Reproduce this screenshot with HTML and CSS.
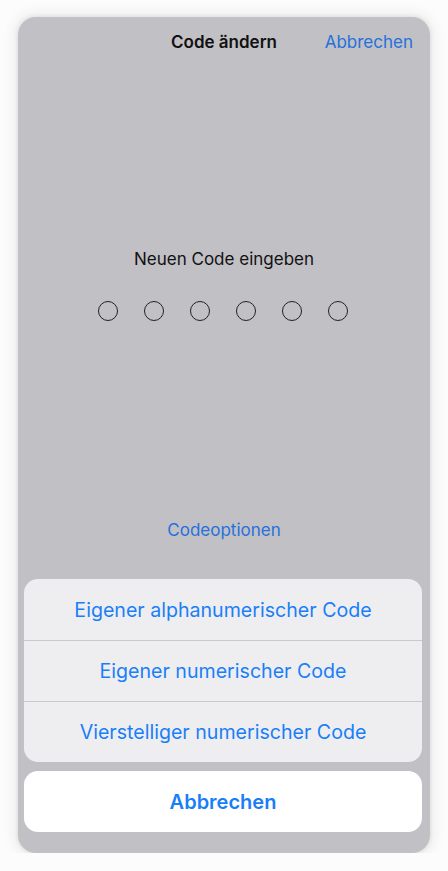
FILE: index.html
```html
<!DOCTYPE html>
<html lang="de">
<head>
    <meta charset="UTF-8">
    <meta name="viewport" content="width=device-width, initial-scale=1.0">
    <title>Code ändern</title>
    <link rel="stylesheet" href="styles.css">
</head>
<body>
    <div class="screen">
        <div class="navbar">
            <span></span>
            <span class="nav-title">Code ändern</span>
            <span class="nav-cancel">Abbrechen</span>
        </div>

        <p class="prompt">Neuen Code eingeben</p>

        <div class="dots">
            <span class="dot"></span>
            <span class="dot"></span>
            <span class="dot"></span>
            <span class="dot"></span>
            <span class="dot"></span>
            <span class="dot"></span>
        </div>

        <p class="options-link">Codeoptionen</p>

        <div class="sheet">
            <div class="sheet-group">
                <div class="sheet-row">Eigener alphanumerischer Code</div>
                <div class="sheet-row">Eigener numerischer Code</div>
                <div class="sheet-row">Vierstelliger numerischer Code</div>
            </div>
            <div class="sheet-cancel">Abbrechen</div>
        </div>
    </div>
</body>
</html>
```

FILE: styles.css
```css
body {
    margin: 0;
    background: #fcfcfc;
    font-family: Inter, "Noto Sans", Arial, sans-serif;
    -webkit-font-smoothing: antialiased;
}

.screen {
    width: 412px;
    height: 836px;
    margin: 17px 0 0 18px;
    background: #c1c0c5;
    border-radius: 18px;
    box-shadow: 0 0 3px 2px rgba(0, 0, 0, 0.05), 0 0 12px 6px rgba(0, 0, 0, 0.05);
    display: flex;
    flex-direction: column;
    padding-bottom: 21px;
    box-sizing: border-box;
}

.navbar {
    display: grid;
    grid-template-columns: 1fr auto 1fr;
    align-items: center;
    padding-top: 14px;
    line-height: 22px;
}

.nav-title {
    font-size: 17px;
    font-weight: 600;
    color: #111;
}

.nav-cancel {
    justify-self: end;
    padding-right: 17px;
    font-size: 17px;
    color: #2571dc;
}

.prompt {
    margin: 195px 0 0;
    text-align: center;
    font-size: 17px;
    line-height: 22px;
    color: #111;
}

.dots {
    display: flex;
    justify-content: center;
    gap: 26px;
    margin: 31px 3px 0 0;
}

.dot {
    width: 18px;
    height: 18px;
    border: 1px solid #222;
    border-radius: 50%;
}

.options-link {
    margin: 198px 0 0;
    text-align: center;
    font-size: 17px;
    line-height: 22px;
    color: #2571dc;
}

.sheet {
    margin: auto 8px 0 6px;
    display: flex;
    flex-direction: column;
    gap: 9px;
}

.sheet-group {
    background: #eeeef0;
    border-radius: 14px;
    overflow: hidden;
}

.sheet-row {
    height: 61px;
    display: flex;
    align-items: center;
    justify-content: center;
    font-size: 19.6px;
    color: #1a7ef8;
    border-top: 1px solid #c9c9cd;
    box-sizing: border-box;
}

.sheet-row:first-child {
    border-top: none;
}

.sheet-cancel {
    height: 61px;
    background: #fff;
    border-radius: 14px;
    display: flex;
    align-items: center;
    justify-content: center;
    font-size: 20px;
    font-weight: 600;
    color: #1a7ef8;
}
```
